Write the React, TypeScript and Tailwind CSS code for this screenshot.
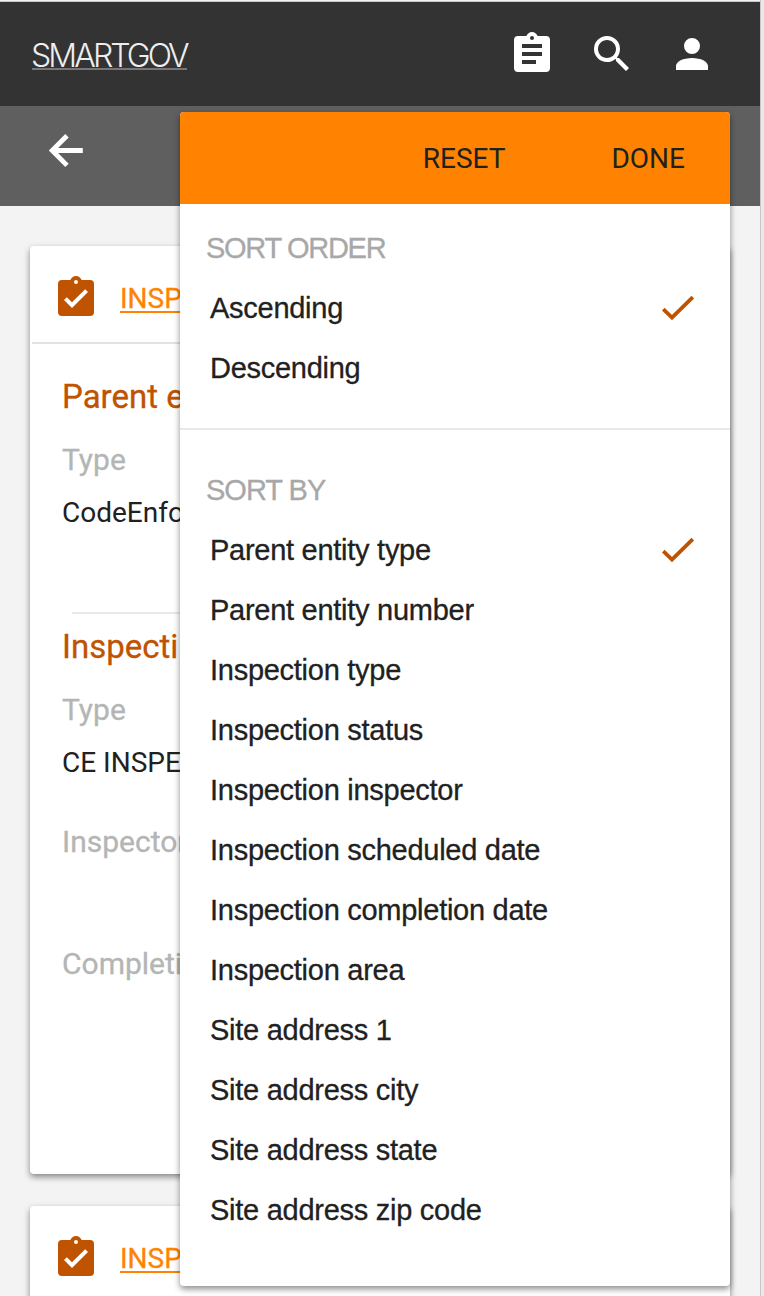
import type { ReactNode } from 'react';

const CLIP_BODY =
  'M12,3A1,1 0 0,1 13,4A1,1 0 0,1 12,5A1,1 0 0,1 11,4A1,1 0 0,1 12,3M19,3H14.82C14.4,1.84 13.3,1 12,1C10.7,1 9.6,1.84 9.18,3H5A2,2 0 0,0 3,5V19A2,2 0 0,0 5,21H19A2,2 0 0,0 21,19V5A2,2 0 0,0 19,3Z';

const ICONS = {
  clipboardText: 'M17,9H7V7H17M17,13H7V11H17M14,17H7V15H14' + CLIP_BODY,
  clipboardCheck: 'M10,17L6,13L7.41,11.59L10,14.17L16.59,7.58L18,9' + CLIP_BODY,
  search:
    'M9.5,3A6.5,6.5 0 0,1 16,9.5C16,11.11 15.41,12.59 14.44,13.73L14.71,14H15.5L20.5,19L19,20.5L14,15.5V14.71L13.73,14.44C12.59,15.41 11.11,16 9.5,16A6.5,6.5 0 0,1 3,9.5A6.5,6.5 0 0,1 9.5,3M9.5,5C7,5 5,7 5,9.5C5,12 7,14 9.5,14C12,14 14,12 14,9.5C14,7 12,5 9.5,5Z',
  account:
    'M12,4A4,4 0 0,1 16,8A4,4 0 0,1 12,12A4,4 0 0,1 8,8A4,4 0 0,1 12,4M12,14C16.42,14 20,15.79 20,18V20H4V18C4,15.79 7.58,14 12,14Z',
};

function Icon({ path, className = '' }: { path: string; className?: string }) {
  return (
    <svg viewBox="0 0 24 24" fill="currentColor" className={`size-12 shrink-0 ${className}`}>
      <path fillRule="evenodd" d={path} />
    </svg>
  );
}

function Check() {
  return (
    <svg viewBox="0 0 34 26" fill="none" stroke="#bf5300" strokeWidth="3.8" className="h-[26px] w-[34px]">
      <path d="M2.3 14.2 L11 22.7 L31.8 2.2" />
    </svg>
  );
}

function CardHeader() {
  return (
    <div className="flex h-24 items-center pl-[22px] pt-2">
      <Icon path={ICONS.clipboardCheck} className="text-[#bf5300]" />
      <a className="ml-5 pt-px text-[28px] text-[#ff8300] underline decoration-2 underline-offset-3 [-webkit-text-stroke:0.3px]">
        INSPE
      </a>
    </div>
  );
}

function Card({ children, className = '' }: { children: ReactNode; className?: string }) {
  return (
    <section
      className={`mx-[30px] shrink-0 overflow-hidden rounded-[4px] bg-white shadow-[0_3px_6px_rgba(0,0,0,0.45)] ${className}`}
    >
      {children}
    </section>
  );
}

function Option({ label, selected = false }: { label: string; selected?: boolean }) {
  return (
    <li className="flex h-[60px] items-center justify-between pl-[30px] pr-[35px]">
      <span className="pt-0.5">{label}</span>
      {selected && <Check />}
    </li>
  );
}

const SORT_FIELDS = [
  'Parent entity type',
  'Parent entity number',
  'Inspection type',
  'Inspection status',
  'Inspection inspector',
  'Inspection scheduled date',
  'Inspection completion date',
  'Inspection area',
  'Site address 1',
  'Site address city',
  'Site address state',
  'Site address zip code',
];

function SortMenu() {
  return (
    <div className="absolute left-[180px] top-[112px] h-[1174px] w-[550px] overflow-hidden rounded-[4px] bg-white font-['Liberation_Sans',Arial,sans-serif] text-[29px] tracking-[-0.27px] text-[#212121] shadow-[0_3px_6px_rgba(0,0,0,0.45)] [-webkit-text-stroke:0.3px]">
      <div className="flex h-[92px] items-center justify-end gap-[106px] bg-[#ff8300] pr-[45px] pt-0.5 font-['Roboto',sans-serif] text-[28px] tracking-normal [-webkit-text-stroke:0]">
        <button>RESET</button>
        <button>DONE</button>
      </div>
      <h2 className="mt-[14px] flex h-[60px] items-center pl-[26px] pt-0.5 tracking-[-1.3px] text-[#a8a8a8]">SORT ORDER</h2>
      <ul>
        <Option label="Ascending" selected />
        <Option label="Descending" />
      </ul>
      <div className="mt-[30px] h-[2px] bg-[#e8e8e8]" />
      <h2 className="mt-[30px] flex h-[60px] items-center pl-[26px] pt-0.5 tracking-[-1px] text-[#a8a8a8]">SORT BY</h2>
      <ul>
        {SORT_FIELDS.map((f, i) => (
          <Option key={f} label={f} selected={i === 0} />
        ))}
      </ul>
    </div>
  );
}

export default function App() {
  return (
    <div className="relative flex h-[1296px] w-[764px] overflow-hidden bg-[#e9e9e9] font-['Roboto',sans-serif]">
      <div className="flex w-[760px] flex-col bg-[#f3f3f3]">
        <div className="h-[2px] shrink-0 border-b border-[#c8c8c8] bg-[#f3f3f3]" />
        <header className="flex h-[104px] shrink-0 items-center justify-between bg-[#333333] pl-8 pr-11 text-white">
          <span className="mt-[6px] -indent-px border-b-2 border-[#777] font-['Inter',sans-serif] text-[32px] font-light leading-[24px] tracking-[-2.9px] text-[#eee]">
            SMARTGOV
          </span>
          <nav className="flex gap-8">
            <Icon path={ICONS.clipboardText} />
            <Icon path={ICONS.search} />
            <Icon path={ICONS.account} />
          </nav>
        </header>
        <div className="h-[100px] shrink-0 bg-[#5f5f5f] pl-12 pt-[27px]">
          <svg viewBox="0 0 36 36" fill="none" stroke="white" strokeWidth="4.8" className="size-9">
            <path d="M19 2.7 L4.2 17.5 L19 32.4 M4.2 17.5 H34.8" />
          </svg>
        </div>
        <Card className="mt-10 h-[928px]">
          <CardHeader />
          <div className="ml-0.5 h-[2px] bg-[#e2e2e2]" />
          <div className="flex flex-col pl-8 text-[28px] leading-8 whitespace-nowrap text-[#212121]">
            <h3 className="mt-[37px] text-[33px] text-[#bf5300] [-webkit-text-stroke:0.3px]">Parent e</h3>
            <span className="mt-[31px] text-[30px] text-[#b4b5b5] [-webkit-text-stroke:0.3px]">Type</span>
            <span className="mt-[21px]">CodeEnfo</span>
            <div className="mt-[83px] ml-2.5 h-[2px] shrink-0 bg-[#e8e8e8]" />
            <h3 className="mt-[17px] text-[33px] text-[#bf5300] [-webkit-text-stroke:0.3px]">Inspecti</h3>
            <span className="mt-[31px] text-[30px] text-[#b4b5b5] [-webkit-text-stroke:0.3px]">Type</span>
            <span className="mt-[21px]">CE INSPE</span>
            <span className="mt-[47px] text-[30px] text-[#b4b5b5] [-webkit-text-stroke:0.3px]">Inspector</span>
            <span className="mt-[90px] text-[30px] text-[#b4b5b5] [-webkit-text-stroke:0.3px]">Completi</span>
          </div>
        </Card>
        <Card className="mt-8 h-[928px]">
          <CardHeader />
        </Card>
      </div>
      <div className="w-px bg-[#c6c6c6]" />
      <SortMenu />
    </div>
  );
}
